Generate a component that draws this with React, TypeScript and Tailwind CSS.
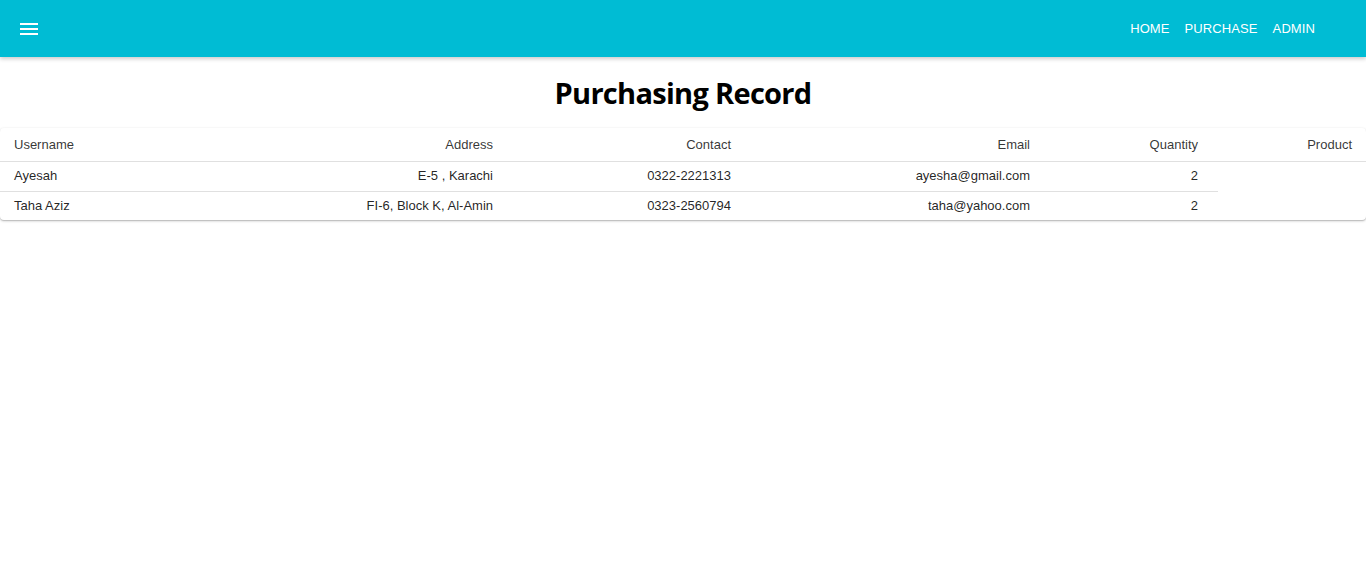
import React from "react";

type Purchase = {
  username: string;
  address: string;
  contact: string;
  email: string;
  quantity: number;
};

const rows: Purchase[] = [
  { username: "Ayesah", address: "E-5 , Karachi", contact: "0322-2221313", email: "ayesha@gmail.com", quantity: 2 },
  { username: "Taha Aziz", address: "FI-6, Block K, Al-Amin", contact: "0323-2560794", email: "taha@yahoo.com", quantity: 2 },
];

const NavBar = () => {
  return (
    <header className="h-[57px] bg-[#00bcd4] flex items-center pl-[17px] pr-[51px] pt-[1px] shadow-[0_2px_4px_rgba(0,0,0,0.2)] relative z-10">
      <button className="w-6 h-6 flex items-center justify-center text-white">
        <svg width="24" height="24" viewBox="0 0 24 24" fill="currentColor">
          <path d="M3 18h18v-2H3v2zm0-5h18v-2H3v2zm0-7v2h18V6H3z" />
        </svg>
      </button>
      <nav className="ml-auto flex items-center gap-[15px] text-white text-[13px] tracking-[0.1px]">
        <a>HOME</a>
        <a>PURCHASE</a>
        <a>ADMIN</a>
      </nav>
    </header>
  );
};

const App = () => {
  return (
    <div className="min-h-[574px] bg-white font-['Liberation_Sans',Arial,sans-serif]">
      <NavBar />
      <h1 className="text-center text-[29px] font-bold text-black font-['Open_Sans',sans-serif] tracking-[-0.7px] pt-[15px] pb-[14px] leading-[42px]">
        Purchasing Record
      </h1>
      <div className="mx-0 rounded bg-white shadow-[0_1px_3px_rgba(0,0,0,0.2),0_1px_1px_rgba(0,0,0,0.14)]">
        <table className="w-full table-fixed border-collapse text-[13px] text-[rgba(0,0,0,0.87)]">
          <colgroup>
            <col className="w-[200px]" />
            <col className="w-[313px]" />
            <col className="w-[238px]" />
            <col className="w-[299px]" />
            <col className="w-[168px]" />
            <col className="w-[148px]" />
          </colgroup>
          <thead>
            <tr className="h-[33px] border-b border-[#e0e0e0] text-[rgba(0,0,0,0.8)]">
              <th className="text-left font-normal pl-[14px]">Username</th>
              <th className="text-right font-normal pr-[20px]">Address</th>
              <th className="text-right font-normal pr-[20px]">Contact</th>
              <th className="text-right font-normal pr-[20px]">Email</th>
              <th className="text-right font-normal pr-[20px]">Quantity</th>
              <th className="text-right font-normal pr-[14px]">Product</th>
            </tr>
          </thead>
          <tbody>
            {rows.map((r, i) => (
              <tr key={i} className={i === 0 ? "h-[30px]" : "h-[29px]"}>
                <td className={"pl-[14px] " + (i === 0 ? "border-b border-[#e0e0e0]" : "")}>{r.username}</td>
                <td className={"text-right pr-[20px] " + (i === 0 ? "border-b border-[#e0e0e0]" : "")}>{r.address}</td>
                <td className={"text-right pr-[20px] " + (i === 0 ? "border-b border-[#e0e0e0]" : "")}>{r.contact}</td>
                <td className={"text-right pr-[20px] " + (i === 0 ? "border-b border-[#e0e0e0]" : "")}>{r.email}</td>
                <td className={"text-right pr-[20px] " + (i === 0 ? "border-b border-[#e0e0e0]" : "")}>{r.quantity}</td>
              </tr>
            ))}
          </tbody>
        </table>
      </div>
    </div>
  );
};

export default App;
